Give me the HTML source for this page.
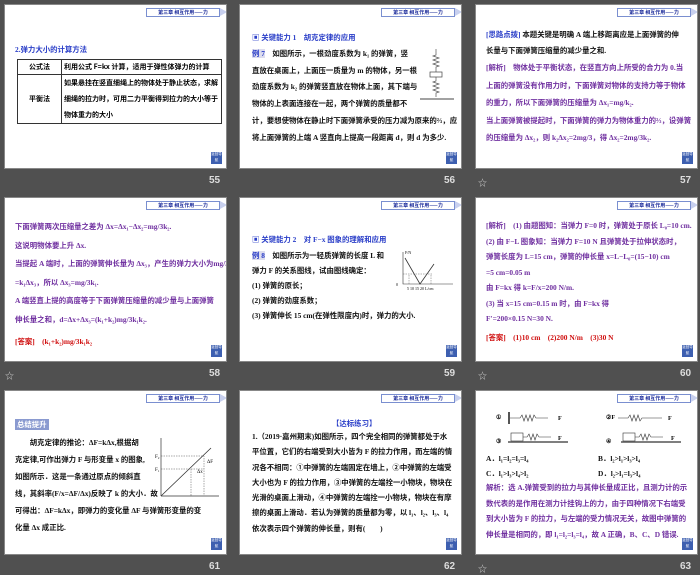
<!DOCTYPE html>
<html><head><meta charset="utf-8"><style>
*{margin:0;padding:0;box-sizing:border-box}
body{width:700px;height:574px;background:#505050;position:relative;overflow:hidden;font-family:"Liberation Serif","Noto Sans CJK SC",serif}
.s{position:absolute;width:223px;height:165px;background:#fff;border:1px solid #888;overflow:hidden}
.hd{position:absolute;left:141px;top:3px;width:74px;height:9px;border:1px solid #7a8fd0;font-size:5px;line-height:7px;color:#1a2a9a;text-align:center;font-weight:bold;font-family:"Noto Sans CJK SC",sans-serif}
.hd:after{content:"";position:absolute;right:-8px;top:-1px;border-left:7px solid #c8d0ee;border-top:4.5px solid transparent;border-bottom:4.5px solid transparent}
.ic{position:absolute;right:4px;bottom:4px;width:11px;height:12px;background:#3d5fb0;color:#fff;font-size:3.5px;line-height:6px;text-align:center;font-family:"Noto Sans CJK SC",sans-serif}
.n{position:absolute;color:#ddd;font:bold 10px "Liberation Sans",sans-serif}
.st{position:absolute;color:#ccc;font-size:9px}
.t{position:absolute;font-size:7.4px;font-weight:bold;color:#111;font-family:"Liberation Serif","Noto Sans CJK SC",serif;white-space:nowrap}
.p{color:#7030a0}.b{color:#2a3ec8}.r{color:#d01010}
</style></head><body>

<!-- 55 -->
<div class="s" style="left:4px;top:4px">
<div class="hd">第三章 相互作用——力</div>
<div class="t b" style="left:10px;top:39px">2.弹力大小的计算方法</div>
<table style="position:absolute;left:12px;top:54px;width:205px;border-collapse:collapse;font-size:7px;font-weight:bold;font-family:'Noto Sans CJK SC',sans-serif;line-height:14px">
<tr><td style="border:1px solid #333;width:44px;text-align:center">公式法</td><td style="border:1px solid #333;padding-left:2px;white-space:nowrap">利用公式 F=kx 计算，适用于弹性体弹力的计算</td></tr>
<tr><td style="border:1px solid #333;text-align:center">平衡法</td><td style="border:1px solid #333;padding-left:2px;line-height:16px">如果悬挂在竖直细绳上的物体处于静止状态，求解细绳的拉力时，可用二力平衡得到拉力的大小等于物体重力的大小</td></tr>
</table>
<div class="ic">返回导航</div></div>
<div class="n" style="left:209px;top:175px">55</div>

<!-- 56 -->
<div class="s" style="left:239px;top:4px">
<div class="hd">第三章 相互作用——力</div>
<div class="t b" style="left:12px;top:27px">▣ 关键能力 1　胡克定律的应用</div>
<div class="t" style="left:12px;top:41px;line-height:16.5px"><span class="b" style="background:#dde">例 7</span>　如图所示，一根劲度系数为 k₁ 的弹簧，竖<br>直放在桌面上，上面压一质量为 m 的物体，另一根<br>劲度系数为 k₂ 的弹簧竖直放在物体上面，其下端与<br>物体的上表面连接在一起，两个弹簧的质量都不</div>
<div class="t" style="left:12px;top:107px;line-height:17px">计，要想使物体在静止时下面弹簧承受的压力减为原来的⅔，应<br>将上面弹簧的上端 A 竖直向上提高一段距离 d，则 d 为多少.</div>
<svg style="position:absolute;left:178px;top:42px" width="36" height="56"><path d="M18 2v6l-3 1 6 2-6 2 6 2-6 2 6 2-3 1v5M18 30v4l-3 1 6 2-6 2 6 2-6 2 6 2-3 1v4" stroke="#555" fill="none" stroke-width=".7"/><rect x="12" y="25" width="12" height="5" fill="#fff" stroke="#444" stroke-width=".7"/><path d="M2 52h34" stroke="#444"/></svg>
<div class="ic">返回导航</div></div>
<div class="n" style="left:444px;top:175px">56</div>

<!-- 57 -->
<div class="s" style="left:475px;top:4px">
<div class="hd">第三章 相互作用——力</div>
<div class="t" style="left:10px;top:22px;line-height:16px"><span class="b">[思路点拨]</span> 本题关键是明确 A 端上移距离应是上面弹簧的伸<br>长量与下面弹簧压缩量的减少量之和.</div>
<div class="t p" style="left:10px;top:54px;line-height:17.5px">[解析]　物体处于平衡状态，在竖直方向上所受的合力为 0.当<br>上面的弹簧没有作用力时，下面弹簧对物体的支持力等于物体<br>的重力，所以下面弹簧的压缩量为 Δx₁=mg/k₂.<br>当上面弹簧被提起时，下面弹簧的弹力为物体重力的⅔，设弹簧<br>的压缩量为 Δx₂，则 k₂Δx₂=2mg/3，得 Δx₂=2mg/3k₂.</div>
<div class="ic">返回导航</div></div>
<div class="st" style="left:478px;top:176px">☆</div>
<div class="n" style="left:680px;top:175px">57</div>

<!-- 58 -->
<div class="s" style="left:4px;top:197px">
<div class="hd">第三章 相互作用——力</div>
<div class="t p" style="left:10px;top:20px;line-height:18.5px">下面弹簧两次压缩量之差为 Δx=Δx₁−Δx₂=mg/3k₂.<br>这说明物体要上升 Δx.<br>当提起 A 端时，上面的弹簧伸长量为 Δx₃，产生的弹力大小为mg/3<br>=k₁Δx₃，所以 Δx₃=mg/3k₁.<br>A 端竖直上提的高度等于下面弹簧压缩量的减少量与上面弹簧<br>伸长量之和，d=Δx+Δx₃=(k₁+k₂)mg/3k₁k₂.</div>
<div class="t r" style="left:10px;top:138px">[答案]　(k₁+k₂)mg/3k₁k₂</div>
<div class="ic">返回导航</div></div>
<div class="st" style="left:5px;top:369px">☆</div>
<div class="n" style="left:209px;top:368px">58</div>

<!-- 59 -->
<div class="s" style="left:239px;top:197px">
<div class="hd">第三章 相互作用——力</div>
<div class="t b" style="left:12px;top:36px">▣ 关键能力 2　对 F−x 图象的理解和应用</div>
<div class="t" style="left:12px;top:50px;line-height:15px"><span class="b" style="background:#dde">例 8</span>　如图所示为一轻质弹簧的长度 L 和<br>弹力 F 的关系图线，试由图线确定：<br>(1) 弹簧的原长；<br>(2) 弹簧的劲度系数；<br>(3) 弹簧伸长 15 cm(在弹性限度内)时，弹力的大小.</div>
<svg style="position:absolute;left:155px;top:52px" width="60" height="42" font-size="4" font-family="Liberation Serif"><path d="M8 2v32h50" stroke="#333" fill="none" stroke-width=".6"/><path d="M10 8l15 26 14-20" stroke="#333" fill="none" stroke-width=".8"/><path d="M8 24h30M14 34v-10M36 34v-10" stroke="#666" stroke-dasharray="1.5 1" stroke-width=".5" fill="none"/><text x="1" y="36">0</text><text x="12" y="40">5 10 15 20 L/cm</text><text x="10" y="4">F/N</text></svg>
<div class="ic">返回导航</div></div>
<div class="n" style="left:444px;top:368px">59</div>

<!-- 60 -->
<div class="s" style="left:475px;top:197px">
<div class="hd">第三章 相互作用——力</div>
<div class="t p" style="left:10px;top:20px;line-height:15.5px">[解析]　(1) 由题图知：当弹力 F=0 时，弹簧处于原长 L₀=10 cm.<br>(2) 由 F−L 图象知：当弹力 F=10 N 且弹簧处于拉伸状态时，<br>弹簧长度为 L=15 cm，弹簧的伸长量 x=L−L₀=(15−10) cm<br>=5 cm=0.05 m<br>由 F=kx 得 k=F/x=200 N/m.<br>(3) 当 x=15 cm=0.15 m 时，由 F=kx 得<br>F′=200×0.15 N=30 N.</div>
<div class="t r" style="left:10px;top:134px">[答案]　(1)10 cm　(2)200 N/m　(3)30 N</div>
<div class="ic">返回导航</div></div>
<div class="st" style="left:478px;top:369px">☆</div>
<div class="n" style="left:680px;top:368px">60</div>

<!-- 61 -->
<div class="s" style="left:4px;top:390px">
<div class="hd">第三章 相互作用——力</div>
<div class="t" style="left:10px;top:28px;color:#fff;background:#8a9ad0;padding:0 2px">总结提升</div>
<div class="t" style="left:10px;top:43px;line-height:17px">　　胡克定律的推论：ΔF=kΔx,根据胡<br>克定律,可作出弹力 F 与形变量 x 的图象,<br>如图所示．这是一条通过原点的倾斜直<br>线，其斜率(F/x=ΔF/Δx)反映了 k 的大小．故<br>可得出：ΔF=kΔx，即弹力的变化量 ΔF 与弹簧形变量的变<br>化量 Δx 成正比.</div>
<svg style="position:absolute;left:148px;top:45px" width="66" height="62" font-size="5" font-family="Liberation Serif"><path d="M8 60V2M8 60h64" stroke="#333" fill="none" stroke-width=".7"/><path d="M8 60L58 12" stroke="#333" stroke-width=".8"/><path d="M8 20h43v40M8 33h30v27M38 33h13" stroke="#555" stroke-dasharray="1.5 1" stroke-width=".5" fill="none"/><text x="44" y="37">Δx</text><text x="54" y="27">ΔF</text><text x="2" y="22">F₂</text><text x="2" y="35">F₁</text></svg>
<div class="ic">返回导航</div></div>
<div class="n" style="left:209px;top:561px">61</div>

<!-- 62 -->
<div class="s" style="left:239px;top:390px">
<div class="hd">第三章 相互作用——力</div>
<div class="t b" style="left:92px;top:27px">【达标练习】</div>
<div class="t" style="left:12px;top:38px;line-height:15.3px">1.（2019·嘉州期末)如图所示，四个完全相同的弹簧都处于水<br>平位置，它们的右端受到大小皆为 F 的拉力作用，而左端的情<br>况各不相同：①中弹簧的左端固定在墙上，②中弹簧的左端受<br>大小也为 F 的拉力作用，③中弹簧的左端拴一小物块，物块在<br>光滑的桌面上滑动，④中弹簧的左端拴一小物块，物块在有摩<br>擦的桌面上滑动．若认为弹簧的质量都为零，以 l₁、l₂、l₃、l₄<br>依次表示四个弹簧的伸长量，则有(　　)</div>
<div class="ic">返回导航</div></div>
<div class="n" style="left:444px;top:561px">62</div>

<!-- 63 -->
<div class="s" style="left:475px;top:390px">
<div class="hd">第三章 相互作用——力</div>
<svg style="position:absolute;left:20px;top:18px" width="200" height="40" font-size="6" font-family="Liberation Serif" font-weight="bold"><text x="0" y="10">①</text><path d="M13 3v12" stroke="#555" stroke-width="2"/><path d="M14 9h10l2-3 2 6 2-6 2 6 2-6 2 6 2-6 2 3h12" stroke="#333" fill="none" stroke-width=".6"/><text x="62" y="11">F</text><text x="110" y="10">②F</text><path d="M122 9h10l2-3 2 6 2-6 2 6 2-6 2 6 2-3h20" stroke="#333" fill="none" stroke-width=".6"/><text x="172" y="11">F</text><text x="0" y="34">③</text><rect x="15" y="24" width="12" height="8" fill="#fff" stroke="#333" stroke-width=".6"/><path d="M12 33h60M125 33h60" stroke="#555" stroke-width="1.5"/><path d="M27 28h4l2-3 2 6 2-6 2 6 2-6 2 3h12" stroke="#333" fill="none" stroke-width=".6"/><text x="62" y="31">F</text><text x="110" y="34">④</text><rect x="127" y="24" width="12" height="8" fill="#fff" stroke="#333" stroke-width=".6"/><path d="M139 28h4l2-3 2 6 2-6 2 6 2-6 2 3h12" stroke="#333" fill="none" stroke-width=".6"/><text x="175" y="31">F</text></svg>
<div class="t" style="left:10px;top:60px;line-height:15px">A．l₁=l₂=l₃=l₄<br>C．l₁&gt;l₃&gt;l₄&gt;l₂</div>
<div class="t" style="left:122px;top:60px;line-height:15px">B．l₂&gt;l₁&gt;l₃&gt;l₄<br>D．l₂&gt;l₁=l₃&gt;l₄</div>
<div class="t p" style="left:10px;top:89px;line-height:15.5px">解析：选 A.弹簧受到的拉力与其伸长量成正比，且测力计的示<br>数代表的是作用在测力计挂钩上的力，由于四种情况下右端受<br>到大小皆为 F 的拉力，与左端的受力情况无关，故图中弹簧的<br>伸长量是相同的，即 l₁=l₂=l₃=l₄，故 A 正确，B、C、D 错误.</div>
<div class="ic">返回导航</div></div>
<div class="st" style="left:478px;top:562px">☆</div>
<div class="n" style="left:680px;top:561px">63</div>
</body></html>
